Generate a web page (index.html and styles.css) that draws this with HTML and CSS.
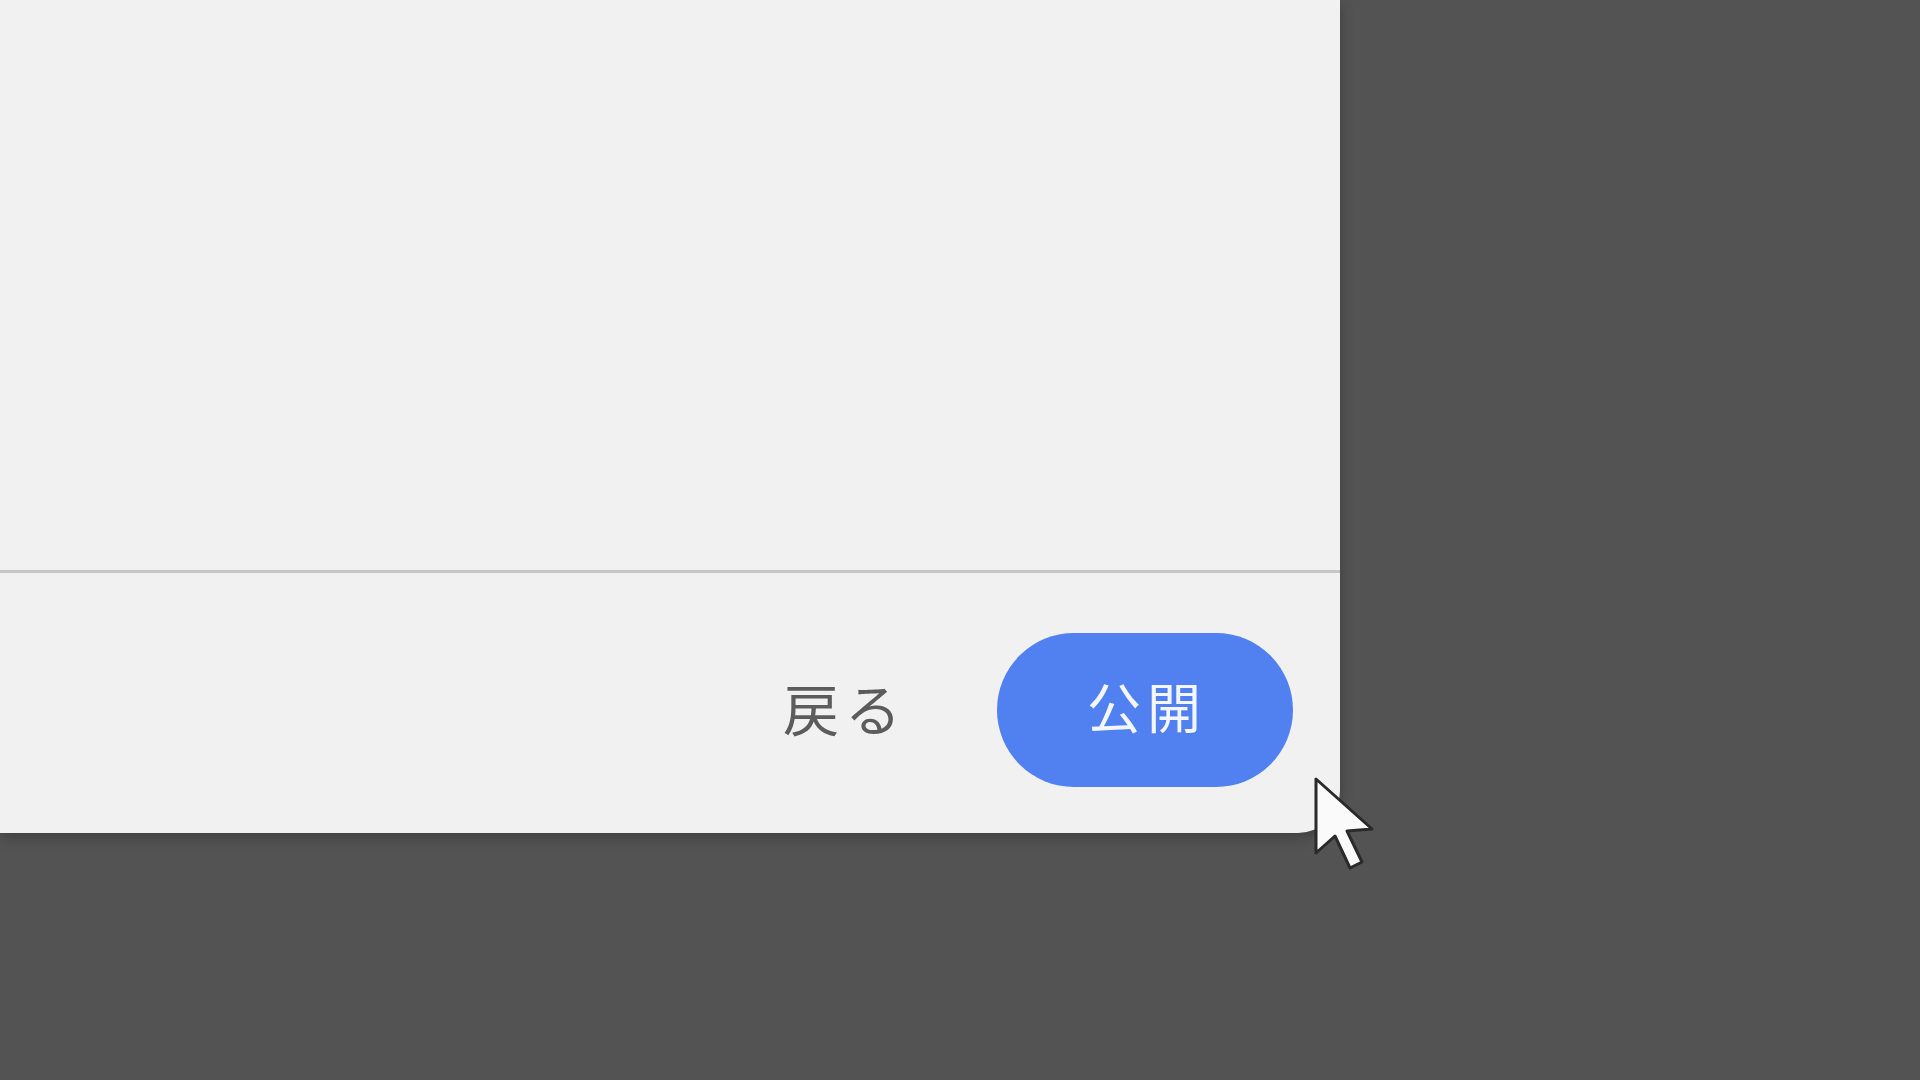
FILE: index.html
```html
<!DOCTYPE html>
<html lang="ja">
<head>
  <meta charset="UTF-8">
  <title>公開</title>
  <link rel="stylesheet" href="styles.css">
</head>
<body>
  <div class="dialog">
    <div class="dialog-body"></div>
    <div class="dialog-footer">
      <button class="btn-back">戻る</button>
      <button class="btn-publish">公開</button>
    </div>
  </div>

  <!-- mouse pointer over the dialog corner -->
  <svg class="cursor" width="64" height="96" viewBox="0 0 64 96">
    <path d="M3 3 L3 77 L22 60 L37 92 L49 86 L34 55 L59 53 Z" fill="#fafafa" stroke="#2a2a2a" stroke-width="3" stroke-linejoin="round"/>
  </svg>
</body>
</html>
```

FILE: styles.css
```css
body {
  margin: 0;
  width: 1920px;
  height: 1080px;
  background: #535353;
  font-family: "Noto Sans CJK JP", sans-serif;
  overflow: hidden;
  position: relative;
}

.dialog {
  width: 1340px;
  height: 833px;
  background: #f1f1f1;
  border-bottom-right-radius: 42px;
  box-shadow: 0 4px 14px rgba(0,0,0,0.25);
  display: flex;
  flex-direction: column;
}

.dialog-body {
  height: 570px;
  border-bottom: 3px solid #c6c6c6;
}

.dialog-footer {
  flex: 1;
  display: flex;
  justify-content: flex-end;
  align-items: center;
  gap: 90px;
  padding: 14px 47px 0 0;
}

button {
  font-family: "Noto Sans CJK JP", sans-serif;
  font-size: 54px;
  font-weight: 400;
  line-height: 1;
  letter-spacing: 6px;
  border: none;
  cursor: pointer;
}

.btn-back {
  background: none;
  color: #5c5c5c;
  font-size: 56px;
  padding: 0 0 6px;
}

.btn-publish {
  width: 296px;
  height: 154px;
  border-radius: 77px;
  background: #5181f0;
  color: #f4f6ff;
  padding: 0 0 8px 4px;
}

/* pointer sits on top of everything */
.cursor {
  position: absolute;
  left: 1313px;
  top: 776px;
}
```
